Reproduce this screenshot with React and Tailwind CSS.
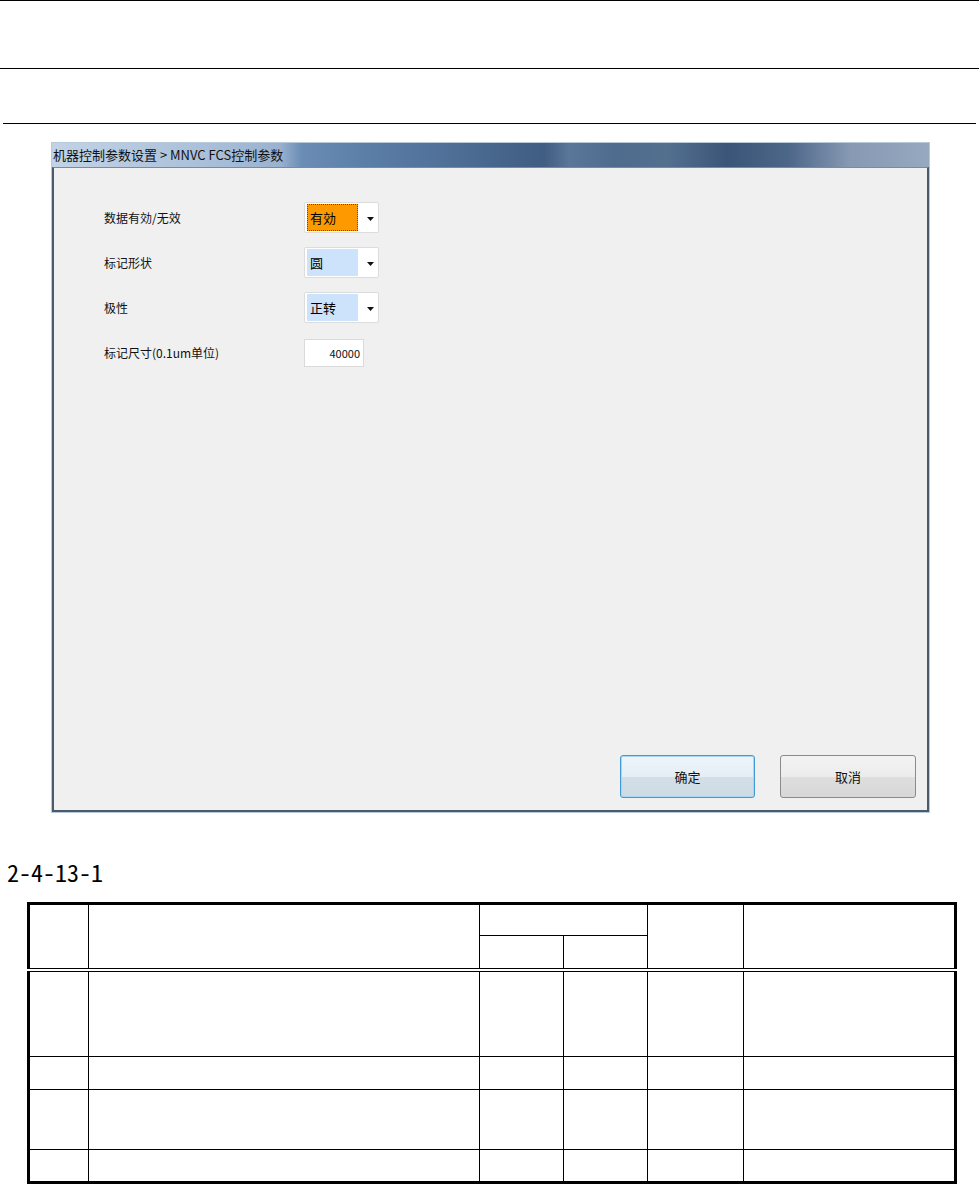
import React from "react";

const ui = "font-['Noto_Sans_CJK_SC','Noto_Sans',sans-serif]";

function Select({ value, active }) {
  return (
    <div className="relative w-[75px] h-[31px] bg-white border border-[#dcdcdc] rounded-[2px]">
      <div
        className={
          active
            ? "absolute left-[2px] top-[1px] w-[51px] h-[27px] bg-[#ff9900] border border-dotted border-[#7a4a00] flex items-center pl-[2px] text-[13px] text-black"
            : "absolute left-[2px] top-[1px] w-[51px] h-[27px] bg-[#cde3fb] flex items-center pl-[3px] text-[13px] text-black"
        }
      >
        {value}
      </div>
      {/* dropdown arrow */}
      <svg className="absolute left-[62px] top-[14px]" width="7" height="4" viewBox="0 0 7 4">
        <path d="M0 0h7L3.5 4z" fill="#111" />
      </svg>
    </div>
  );
}

function FormRow({ label, children }) {
  return (
    <div className="flex items-center">
      <div className="w-[200px] text-[12px] text-[#111]">{label}</div>
      {children}
    </div>
  );
}

function Dialog() {
  return (
    <div className={`w-[879px] h-[671px] ml-[51px] border border-[#b9c9dc] flex flex-col ${ui}`}>
      {/* Title bar */}
      <div className="h-[24px] flex items-center pl-[1px] text-[13px] text-[#111] bg-[linear-gradient(90deg,#c3d3e6_0%,#a9bfd9_18%,#9ab2cf_26%,#6a8cb5_28.5%,#5b7ea7_36%,#52739b_43%,#405d82_56%,#5a7799_59%,#4f6b8d_64%,#54708f_70%,#3b5578_77%,#4d6789_84%,#8799b3_91%,#97a9c0_100%)]">
        机器控制参数设置 &gt; MNVC FCS控制参数
      </div>
      {/* Client area */}
      <div className="flex-1 flex flex-col bg-[#f0f0f0] border-t border-t-[#7f8a98] border-l-2 border-l-[#4b596c] border-r-2 border-r-[#4b596c] border-b-2 border-b-[#4b596c]">
        <div className="flex flex-col pt-[34px] pl-[50px]">
          <FormRow label="数据有効/无效">
            <Select value="有効" active />
          </FormRow>
          <div className="h-[14px]" />
          <FormRow label="标记形状">
            <Select value="圆" />
          </FormRow>
          <div className="h-[14px]" />
          <FormRow label="极性">
            <Select value="正转" />
          </FormRow>
          <div className="h-[16px]" />
          <FormRow label="标记尺寸(0.1um单位)">
            <div className="w-[60px] h-[28px] bg-white border border-[#dadada] flex items-center justify-end pr-[3px] text-[11px] text-[#111]">
              40000
            </div>
          </FormRow>
        </div>
        <div className="mt-auto flex justify-end gap-[25px] pr-[11px] pb-[12px]">
          <button className="w-[135px] h-[43px] rounded-[3px] border border-[#3f9bd6] shadow-[0_0_0_1px_#a6d8f3_inset] bg-[linear-gradient(180deg,#eef5fa_0%,#e4eef5_50%,#d3dfe7_51%,#cfdbe4_100%)] text-[13px] text-[#111]">
            确定
          </button>
          <button className="w-[136px] h-[43px] rounded-[3px] border border-[#8b8b8b] bg-[linear-gradient(180deg,#f3f3f3_0%,#ececec_50%,#dedede_51%,#d7d7d7_100%)] text-[13px] text-[#111]">
            取消
          </button>
        </div>
      </div>
    </div>
  );
}

function SpecTable() {
  const cell = "border border-black";
  const head = "border border-black border-b-[4px] [border-bottom-style:double]";
  const rows = [87, 33, 60, 33];
  return (
    <table className="ml-[27px] w-[927px] table-fixed border-collapse border-[3px] border-black">
      <colgroup>
        <col className="w-[60px]" />
        <col className="w-[391px]" />
        <col className="w-[84px]" />
        <col className="w-[84px]" />
        <col className="w-[96px]" />
        <col className="w-[212px]" />
      </colgroup>
      <thead>
        <tr className="h-[32px]">
          <th rowSpan={2} className={head}></th>
          <th rowSpan={2} className={head}></th>
          <th colSpan={2} className={cell}></th>
          <th rowSpan={2} className={head}></th>
          <th rowSpan={2} className={head}></th>
        </tr>
        <tr className="h-[34px]">
          <th className={head}></th>
          <th className={head}></th>
        </tr>
      </thead>
      <tbody>
        {rows.map((h, i) => (
          <tr key={i} style={{ height: h }}>
            <td className={cell}></td>
            <td className={cell}></td>
            <td className={cell}></td>
            <td className={cell}></td>
            <td className={cell}></td>
            <td className={cell}></td>
          </tr>
        ))}
      </tbody>
    </table>
  );
}

export default function App() {
  return (
    <div className="w-[979px] h-[1184px] bg-white overflow-hidden">
      {/* page header rules */}
      <div className="h-[69px] border-t border-b border-black" />
      <div className="h-[55px] mx-[3px] border-b border-black" />

      <div className="pt-[18px]">
        <Dialog />
      </div>

      <div className="mt-[44px] h-[30px] pl-[7px] leading-[30px] text-[24px] text-black font-['Noto_Sans_Mono_CJK_SC','DejaVu_Sans_Mono',monospace]">
        2-4-13-1
      </div>

      <div className="mt-[15px]">
        <SpecTable />
      </div>
    </div>
  );
}
